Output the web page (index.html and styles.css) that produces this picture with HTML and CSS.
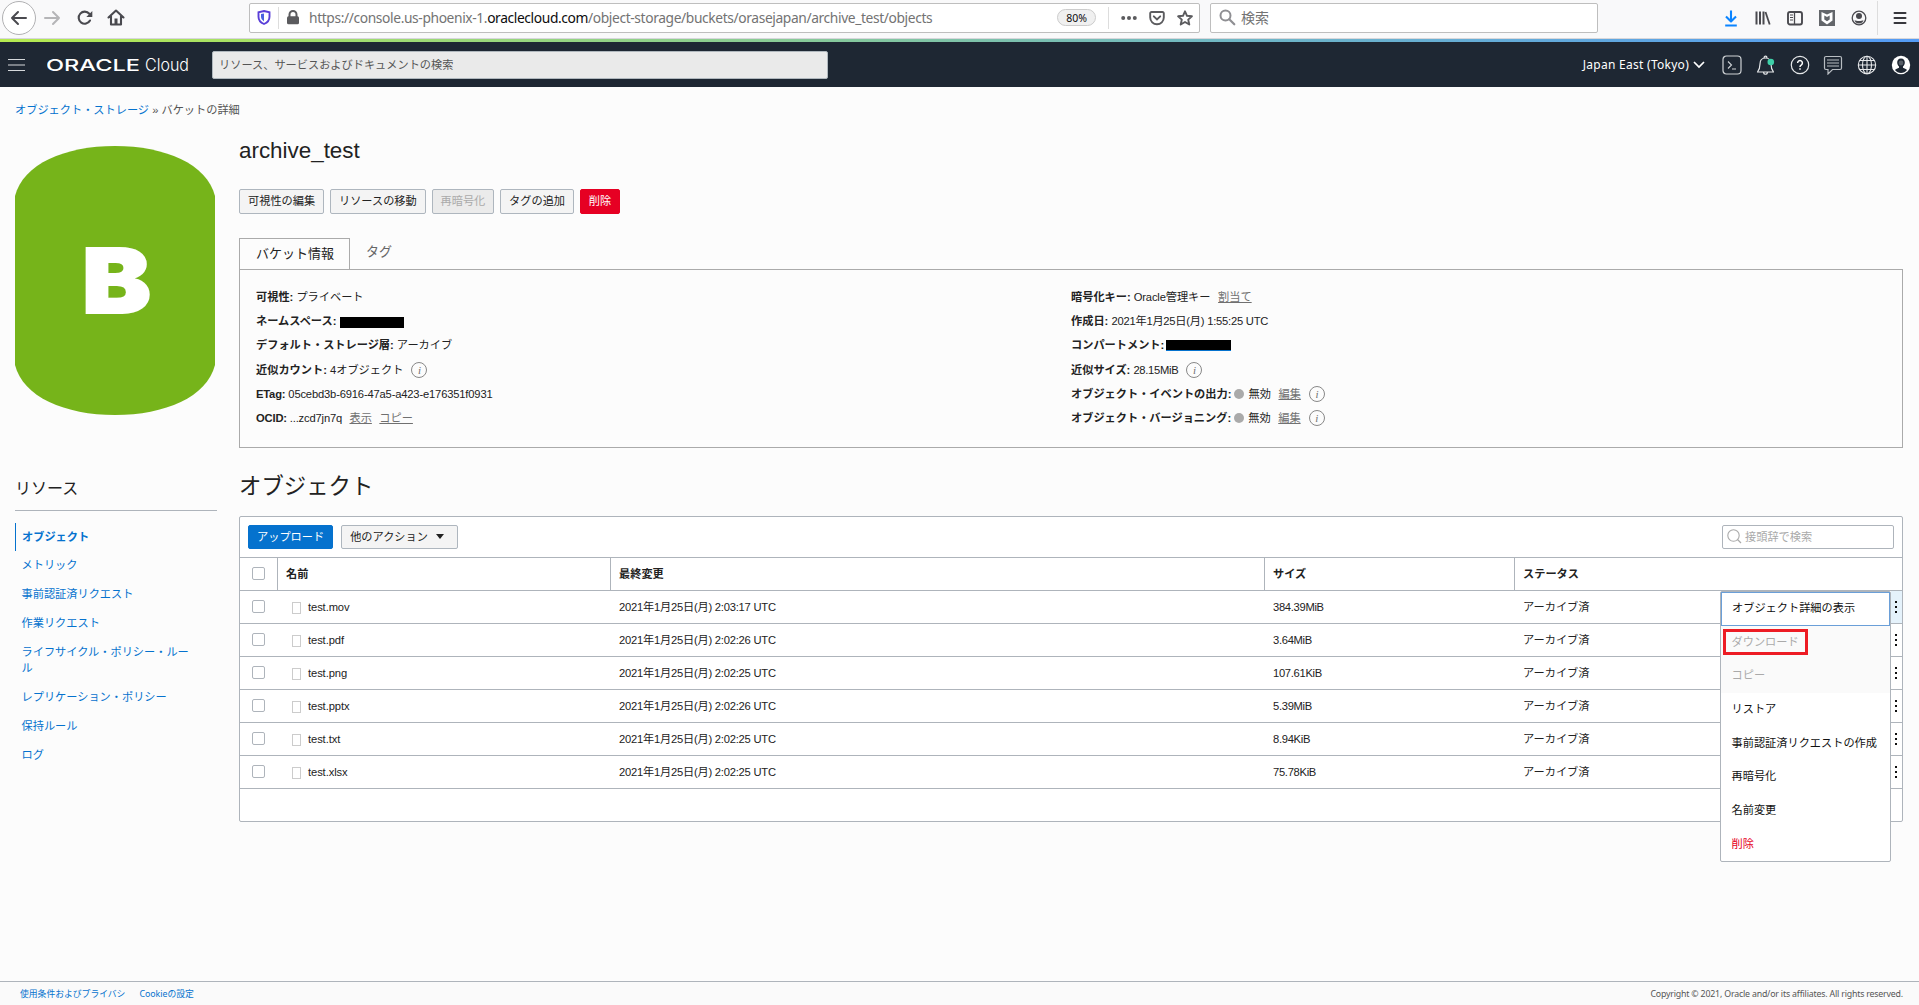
FILE: index.html
```html
<!DOCTYPE html>
<html lang="ja">
<head>
    <meta charset="UTF-8">
    <title>バケットの詳細</title>
    <link rel="stylesheet" href="styles.css">
</head>
<body>
    <div class="browser">
        <div class="back">
            <svg width="18" height="16" viewBox="0 0 18 16"><path d="M16 8H2M8 2L2 8l6 6" fill="none" stroke="#4a4a4f" stroke-width="2" stroke-linecap="round" stroke-linejoin="round"/></svg>
        </div>
        <svg class="forward" width="18" height="16" viewBox="0 0 18 16"><path d="M2 8h14M10 2l6 6-6 6" fill="none" stroke="#b5b5b7" stroke-width="2" stroke-linecap="round" stroke-linejoin="round"/></svg>
        <svg class="reload" width="16" height="16" viewBox="0 0 16 16"><path d="M13 10.500A6 6 0 1 1 12.300 3.800" fill="none" stroke="#4a4a4f" stroke-width="2.100" stroke-linecap="round"/><path d="M15.300 1v6H9.300z" fill="#4a4a4f"/></svg>
        <svg class="home" width="18" height="17" viewBox="0 0 18 17"><path d="M1.500 8.500L9 1.500l7.500 7M4 7v8.500h10V7" fill="none" stroke="#4a4a4f" stroke-width="2.100" stroke-linecap="round" stroke-linejoin="round"/><path d="M7.500 9.500h3V15h-3z" fill="#4a4a4f"/></svg>
        <div class="urlbar">
            <svg class="shield" width="14" height="15" viewBox="0 0 14 15"><path d="M7 1l5.500 1.200v4.500c0 3.500-2 5.800-5.500 7.300-3.500-1.500-5.500-3.800-5.500-7.300V2.200z" fill="none" stroke="#5a3fd8" stroke-width="1.900"/><path d="M7 3.500v8C5 10 4 8.500 4 6.500V4z" fill="#4a62e0"/></svg>
            <span class="divider"></span>
            <svg class="lock" width="14" height="15" viewBox="0 0 14 15"><path d="M3.500 7V4.500a3.500 3.500 0 0 1 7 0V7" fill="none" stroke="#5b5b5e" stroke-width="2"/><rect x="1" y="6.300" width="12" height="8" rx="1.500" fill="#5b5b5e"/></svg>
            <span class="url">https://console.us-phoenix-1.<b>oraclecloud.com</b>/object-storage/buckets/orasejapan/archive_test/objects</span>
            <span class="zoom">80%</span>
            <span class="url-tools">
                <svg width="16" height="16" viewBox="0 0 16 16"><g fill="#5b5b5e"><circle cx="2.200" cy="8" r="2"/><circle cx="8" cy="8" r="2"/><circle cx="13.800" cy="8" r="2"/></g></svg>
                <svg width="16" height="16" viewBox="0 0 16 16"><path d="M2.500 2h11a1.300 1.300 0 0 1 1.300 1.300V7.500a6.800 6.800 0 0 1-13.600 0V3.300A1.300 1.300 0 0 1 2.500 2z" fill="none" stroke="#5b5b5e" stroke-width="1.900"/><path d="M4.800 6.300L8 9.500l3.200-3.200" fill="none" stroke="#5b5b5e" stroke-width="1.900" stroke-linecap="round"/></svg>
                <svg width="16" height="16" viewBox="0 0 16 16"><path d="M8 1.300l2 4.500 4.900.5-3.700 3.300 1.100 4.900L8 12l-4.300 2.500 1.100-4.900L1.100 6.300 6 5.800z" fill="none" stroke="#5b5b5e" stroke-width="1.900" stroke-linejoin="round"/></svg>
            </span>
        </div>
        <div class="searchbar">
            <svg width="17" height="17" viewBox="0 0 17 17"><circle cx="6.500" cy="6.500" r="5" fill="none" stroke="#8f8f93" stroke-width="2"/><path d="M10.300 10.300l5 5" stroke="#8f8f93" stroke-width="2.200" stroke-linecap="round"/></svg>
            <span>検索</span>
        </div>
        <div class="toolbar-icons">
            <svg width="16" height="18" viewBox="0 0 16 18"><path d="M8 1.500v11M3 7.500l5 5 5-5M2.200 16.500h11.600" fill="none" stroke="#0a84ff" stroke-width="2.100" stroke-linejoin="round"/></svg>
            <svg width="16" height="16" viewBox="0 0 16 16"><path d="M1.500 1.500v13M5 1.500v13M8.500 1.500v13" stroke="#4a4a4f" stroke-width="2"/><path d="M10.500 2l4.200 12.500" stroke="#4a4a4f" stroke-width="1.800"/></svg>
            <svg width="16" height="16" viewBox="0 0 16 16"><rect x="1" y="2" width="14" height="12.500" rx="2" fill="none" stroke="#4a4a4f" stroke-width="1.900"/><path d="M7.500 2v12" stroke="#4a4a4f" stroke-width="1.300"/><path d="M3 5h3M3 7.500h3M3 10h3" stroke="#4a4a4f"/></svg>
            <svg width="16" height="16" viewBox="0 0 16 16"><rect width="16" height="16" fill="#63666a"/><path d="M2.500 2L8 4.500 13.500 2v8.500L8 14.500l-5.500-4z" fill="#fff"/><path d="M5.300 5.500L8 7l2.700-1.500v4L8 11.300 5.300 9.500z" fill="#63666a"/></svg>
            <svg width="16" height="16" viewBox="0 0 16 16"><circle cx="8" cy="8" r="6.800" fill="none" stroke="#4a4a4f" stroke-width="1.300"/><circle cx="8" cy="6" r="3" fill="#4a4a4f"/><path d="M3.500 10.200c2 1 7 1 9 0-.7 2.300-2.500 3.300-4.500 3.300s-3.800-1-4.500-3.300z" fill="#4a4a4f"/></svg>
        </div>
        <div class="app-menu">
            <svg width="14" height="14" viewBox="0 0 14 14"><path d="M1.500 2h11M1.500 7h11M1.500 12h11" stroke="#38383d" stroke-width="2" stroke-linecap="round"/></svg>
        </div>
    </div>
    <div class="stripe"></div>

    <header class="nav">
        <svg class="burger" width="17" height="12" viewBox="0 0 17 12"><path d="M0 .5h17M0 6h17M0 11.500h17" stroke="#d5d8db"/></svg>
        <svg class="brand" width="146" height="24" viewBox="0 0 146 24">
            <text class="brand-oracle" x="-1" y="18" textLength="94" lengthAdjust="spacingAndGlyphs">ORACLE</text>
            <text class="brand-cloud" x="98" y="18" textLength="44" lengthAdjust="spacingAndGlyphs">Cloud</text>
        </svg>
        <div class="nav-search">リソース、サービスおよびドキュメントの検索</div>
        <div class="region">Japan East (Tokyo)</div>
        <svg class="chevron" width="12" height="8" viewBox="0 0 12 8"><path d="M1 1l5 5 5-5" fill="none" stroke="#fff" stroke-width="1.700"/></svg>
        <div class="nav-icons">
            <svg width="20" height="20" viewBox="0 0 20 20"><rect x="1" y="1" width="18" height="18" rx="3.500" fill="none" stroke="#cfd3d6" stroke-width="1.200"/><path d="M6 6.500l3.500 3.500L6 13.500M10 14h4" fill="none" stroke="#cfd3d6" stroke-width="1.100"/></svg>
            <svg width="20" height="20" viewBox="0 0 20 20"><path d="M1.500 17h16c-2-2.500-2.500-4-2.500-8 0-3.500-2-6-5.500-6S4 5.500 4 9c0 4-.5 5.500-2.500 8zM8 3c0-2.500 3-2.500 3 0M7.500 17.500c.5 2.300 3.500 2.300 4 0" fill="none" stroke="#e6e8ea" stroke-width="1.200" stroke-linejoin="round"/><circle cx="14.800" cy="7" r="3.300" fill="#3ecfa8"/></svg>
            <svg width="20" height="20" viewBox="0 0 20 20"><circle cx="10" cy="10" r="8.700" fill="none" stroke="#e6e8ea" stroke-width="1.200"/><path d="M7.600 8a2.400 2.400 0 1 1 3.600 2.100c-.8.500-1.200.8-1.200 1.900M10 13.300v1.500" fill="none" stroke="#fff" stroke-width="1.500"/></svg>
            <svg width="20" height="20" viewBox="0 0 20 20"><path d="M3 1.500h14a1.500 1.500 0 0 1 1.500 1.500v10a1.500 1.500 0 0 1-1.500 1.500H9.500L5 19v-4.500H3A1.500 1.500 0 0 1 1.500 13V3A1.500 1.500 0 0 1 3 1.500z" fill="none" stroke="#b8bdc2" stroke-width="1.200"/><path d="M4 5h12M4 8h12M4 11h12" stroke="#b8bdc2" stroke-width="1.100"/></svg>
            <svg width="20" height="20" viewBox="0 0 20 20"><g fill="none" stroke="#e6e8ea" stroke-width="1.100"><circle cx="10" cy="10" r="8.700"/><ellipse cx="10" cy="10" rx="4.500" ry="8.700"/><path d="M10 1v18M1 10h18M2.500 5.500h15M2.500 14.500h15"/></g></svg>
            <svg width="20" height="20" viewBox="0 0 20 20"><circle cx="10" cy="10" r="9.200" fill="#fff"/><path d="M10 3.500c-2.700 0-3.800 1.800-3.800 4 0 1.800.8 3.200 1.800 4v1.300c-1.500.7-3 1-4 2.200 1.500 2 3.500 3 6 3s4.500-1 6-3c-1-1.200-2.500-1.500-4-2.200v-1.300c1-.8 1.800-2.200 1.800-4 0-2.200-1.100-4-3.800-4z" fill="#1e2733"/><circle cx="10" cy="8" r="2.400" fill="#fff" opacity=".25"/></svg>
        </div>
    </header>

    <div class="page">
        <aside class="side">
            <div class="crumbs"><a>オブジェクト・ストレージ</a> » バケットの詳細</div>
            <svg class="bucket" width="200" height="269" viewBox="0 0 200 269">
                <path d="M0 50C8 18 50 0 100 0s92 18 100 50v169c-8 32-50 50-100 50S8 251 0 219z"/>
                <text x="67" y="167" textLength="69" lengthAdjust="spacingAndGlyphs">B</text>
            </svg>
            <h3>リソース</h3>
            <ul class="resources">
                <li class="active">オブジェクト</li>
                <li>メトリック</li>
                <li>事前認証済リクエスト</li>
                <li>作業リクエスト</li>
                <li>ライフサイクル・ポリシー・ルール</li>
                <li>レプリケーション・ポリシー</li>
                <li>保持ルール</li>
                <li>ログ</li>
            </ul>
        </aside>

        <main class="main">
            <h1>archive_test</h1>
            <div class="actions">
                <button class="btn">可視性の編集</button>
                <button class="btn">リソースの移動</button>
                <button class="btn disabled">再暗号化</button>
                <button class="btn">タグの追加</button>
                <button class="btn danger">削除</button>
            </div>

            <div class="tabs">
                <div class="tab current">バケット情報</div>
                <div class="tab">タグ</div>
            </div>
            <div class="info">
                <div class="info-col">
                    <p><b>可視性:</b> プライベート</p>
                    <p><b>ネームスペース:</b> <span class="redact"></span></p>
                    <p><b>デフォルト・ストレージ層:</b> アーカイブ</p>
                    <p><b>近似カウント:</b> 4オブジェクト <i class="tip">i</i></p>
                    <p class="latin"><b>ETag:</b> 05cebd3b-6916-47a5-a423-e176351f0931</p>
                    <p class="latin"><b>OCID:</b> ...zcd7jn7q <a>表示</a> <a>コピー</a></p>
                </div>
                <div class="info-col">
                    <p><b>暗号化キー:</b> <span class="latin">Oracle</span>管理キー <a>割当て</a></p>
                    <p><b>作成日:</b> <span class="date">2021年1月25日(月) 1:55:25 UTC</span></p>
                    <p><b>コンパートメント:</b> <span class="redact linked"></span></p>
                    <p><b>近似サイズ:</b> <span class="size">28.15MiB</span> <i class="tip">i</i></p>
                    <p><b>オブジェクト・イベントの出力:</b> <span class="dot"></span>無効 <a>編集</a> <i class="tip">i</i></p>
                    <p><b>オブジェクト・バージョニング:</b> <span class="dot"></span>無効 <a>編集</a> <i class="tip">i</i></p>
                </div>
            </div>

            <h2>オブジェクト</h2>
            <div class="panel">
                <div class="panel-bar">
                    <button class="btn primary">アップロード</button>
                    <button class="btn more">他のアクション <span class="caret"></span></button>
                    <div class="prefix">
                        <svg width="15" height="15" viewBox="0 0 15 15"><circle cx="6.500" cy="6.500" r="5.700" fill="none" stroke="#aaa" stroke-width="1.100"/><path d="M10.500 10.500l3.500 3.500" stroke="#aaa" stroke-width="1.300"/></svg>
                        <span>接頭辞で検索</span>
                    </div>
                </div>
                <table>
                    <colgroup><col class="c-check"><col class="c-name"><col class="c-date"><col class="c-size"><col><col class="c-menu"></colgroup>
                    <tr><th><span class="check"></span></th><th>名前</th><th>最終変更</th><th>サイズ</th><th>ステータス</th><th></th></tr>
                    <tr><td><span class="check"></span></td><td><span class="file"></span>test.mov</td><td class="date">2021年1月25日(月) 2:03:17 UTC</td><td class="size">384.39MiB</td><td>アーカイブ済</td><td class="dots open"><span></span></td></tr>
                    <tr><td><span class="check"></span></td><td><span class="file"></span>test.pdf</td><td class="date">2021年1月25日(月) 2:02:26 UTC</td><td class="size">3.64MiB</td><td>アーカイブ済</td><td class="dots"><span></span></td></tr>
                    <tr><td><span class="check"></span></td><td><span class="file"></span>test.png</td><td class="date">2021年1月25日(月) 2:02:25 UTC</td><td class="size">107.61KiB</td><td>アーカイブ済</td><td class="dots"><span></span></td></tr>
                    <tr><td><span class="check"></span></td><td><span class="file"></span>test.pptx</td><td class="date">2021年1月25日(月) 2:02:26 UTC</td><td class="size">5.39MiB</td><td>アーカイブ済</td><td class="dots"><span></span></td></tr>
                    <tr><td><span class="check"></span></td><td><span class="file"></span>test.txt</td><td class="date">2021年1月25日(月) 2:02:25 UTC</td><td class="size">8.94KiB</td><td>アーカイブ済</td><td class="dots"><span></span></td></tr>
                    <tr><td><span class="check"></span></td><td><span class="file"></span>test.xlsx</td><td class="date">2021年1月25日(月) 2:02:25 UTC</td><td class="size">75.78KiB</td><td>アーカイブ済</td><td class="dots"><span></span></td></tr>
                </table>
                <ul class="menu">
                    <li class="focus">オブジェクト詳細の表示</li>
                    <li class="off"><span class="marked">ダウンロード</span></li>
                    <li class="off">コピー</li>
                    <li>リストア</li>
                    <li>事前認証済リクエストの作成</li>
                    <li>再暗号化</li>
                    <li>名前変更</li>
                    <li class="delete">削除</li>
                </ul>
            </div>
        </main>
    </div>

    <footer class="footer">
        <a>使用条件およびプライバシ</a>
        <a>Cookieの設定</a>
        <span class="copy">Copyright © 2021, Oracle and/or its affiliates. All rights reserved.</span>
    </footer>
</body>
</html>
```

FILE: styles.css
```css
* {
    box-sizing: border-box;
}
body {
    margin: 0;
    height: 1005px;
    display: flex;
    flex-direction: column;
    overflow: hidden;
    background: #fcfcfc;
    color: #222;
    font-family: "Liberation Sans", "Noto Sans CJK JP", sans-serif;
    font-size: 11.2px;
    line-height: 16px;
}
h1, h2, h3, p, ul {
    margin: 0;
    padding: 0;
    font-weight: normal;
}
ul {
    list-style: none;
}
svg {
    display: block;
    flex: none;
}
a {
    color: #0572ce;
}

/* browser toolbar */
.browser {
    display: flex;
    align-items: center;
    height: 39px;
    padding: 0 12px 3px 2px;
    background: #f9f9fa;
    border-bottom: 1px solid #d7d7db;
}
.back {
    display: flex;
    align-items: center;
    justify-content: center;
    width: 34px;
    height: 34px;
    border: 1px solid #b1b1b3;
    border-radius: 50%;
    background: #fff;
}
.forward {
    margin-left: 7px;
}
.reload {
    margin-left: 16px;
}
.home {
    margin-left: 14px;
}
.urlbar, .searchbar {
    display: flex;
    align-items: center;
    height: 30px;
    background: #fff;
    border: 1px solid #bebebe;
    border-radius: 2px;
}
.urlbar {
    width: 951px;
    margin-left: 124px;
    padding: 0 6px 0 7px;
    font-family: "Noto Sans", sans-serif;
}
.divider {
    width: 1px;
    height: 22px;
    margin: 0 7px;
    background: #ddd;
}
.url {
    width: 748px;
    margin-left: 9px;
    padding-top: 1px;
    color: #737373;
    font-size: 13.8px;
    letter-spacing: -0.38px;
    white-space: nowrap;
}
.url b {
    color: #0c0c0d;
    font-weight: normal;
}
.zoom {
    width: 39px;
    height: 17px;
    border: 1px solid #ccc;
    border-radius: 9px;
    background: #f0f0f0;
    color: #0c0c0d;
    font-size: 10.5px;
    line-height: 16px;
    text-align: center;
}
.url-tools {
    display: flex;
    gap: 12px;
    margin-left: 12px;
    padding: 3px 0 3px 12px;
    border-left: 1px solid #ddd;
}
.searchbar {
    width: 388px;
    margin-left: 10px;
    padding-left: 8px;
    gap: 5px;
    color: #737373;
    font-size: 14px;
}
.toolbar-icons {
    display: flex;
    align-items: center;
    gap: 16px;
    margin-left: 125px;
}
.app-menu {
    margin-left: auto;
    padding: 10px 0 10px 15px;
    border-left: 1px solid #ddd;
}
.stripe {
    height: 3px;
    background: linear-gradient(to right, #b5ea50, #8fd08c 35%, #6fb6c6 65%, #549bf5);
}

/* console header */
.nav {
    display: flex;
    align-items: center;
    height: 45px;
    padding: 0 8px;
    background: #1e2733;
    color: #fff;
}
.brand {
    margin-left: 22px;
}
.brand text {
    fill: #fff;
}
.brand-oracle {
    font: 500 16.5px "Inter", sans-serif;
}
.brand-cloud {
    font: 300 17px "Inter", sans-serif;
}
.nav-search {
    width: 616px;
    height: 28px;
    margin-left: 19px;
    padding-left: 6px;
    border: 1px solid #b0b8be;
    border-radius: 2px;
    background: #eaeaea;
    color: #555;
    line-height: 26px;
}
.region {
    margin: 1px 0 0 auto;
    font-family: "Noto Sans", sans-serif;
    font-size: 12px;
    letter-spacing: 0.27px;
}
.chevron {
    margin: 1px 0 0 4px;
}
.nav-icons {
    display: flex;
    gap: 13.8px;
    margin-left: 17px;
}

/* page */
.page {
    display: flex;
    flex: 1;
    padding: 0 16px 0 15px;
}
.side {
    width: 202px;
    margin-right: 22px;
}
.crumbs {
    margin-top: 15px;
    width: 260px;
    color: #555;
    white-space: nowrap;
}
.bucket {
    margin-top: 28px;
    fill: #76b41a;
}
.bucket text {
    fill: #fff;
    stroke: #fff;
    stroke-width: 2px;
    font: 900 90px "Inter", sans-serif;
}
.side h3 {
    margin-top: 63px;
    height: 33px;
    border-bottom: 1px solid #aeb4bb;
    font-size: 16px;
    line-height: 22px;
}
.resources {
    padding-top: 12px;
    color: #0572ce;
}
.resources li {
    padding: 6px 20px 7px 6.5px;
    word-break: break-all;
}
.resources .active {
    padding: 6px 20px 6px 6px;
    border-left: 1px solid #0572ce;
    font-weight: bold;
}
.main {
    flex: 1;
}
h1 {
    margin-top: 51px;
    font-size: 22.4px;
    line-height: 26px;
}
.actions {
    display: flex;
    gap: 5.8px;
    margin-top: 25px;
}
.btn {
    height: 25px;
    padding: 0 8px;
    border: 1px solid #aeb6be;
    border-radius: 2px;
    background: #f4f4f4;
    color: #222;
    font: 11.2px/21px "Liberation Sans", "Noto Sans CJK JP", sans-serif;
    white-space: nowrap;
}
.btn.disabled {
    background: #ebebeb;
    color: #aaa;
}
.btn.danger {
    border-color: #e60023;
    background: #e60023;
    color: #fff;
}
.btn.primary {
    border-color: #0572ce;
    background: #0572ce;
    color: #fff;
}
.tabs {
    display: flex;
    margin-top: 24px;
    font-size: 13px;
}
.tab {
    height: 31px;
    padding: 0 16px;
    color: #666;
    line-height: 28px;
    white-space: nowrap;
}
.tab.current {
    width: 111px;
    border: 1px solid #aaa;
    border-bottom: 0;
    color: #222;
    line-height: 29px;
}
.info {
    display: flex;
    height: 179px;
    padding: 15px 16px;
    border: 1px solid #aaa;
}
.info-col {
    width: 815px;
}
.info-col p {
    height: 24.2px;
    line-height: 24.2px;
    white-space: nowrap;
}
.info-col a {
    margin-left: 4.5px;
    color: #707070;
    letter-spacing: 0;
    text-decoration: underline;
}
.latin {
    letter-spacing: -0.17px;
}
.date {
    letter-spacing: -0.22px;
}
.size {
    letter-spacing: -0.3px;
}
.redact {
    display: inline-block;
    width: 64px;
    height: 11px;
    margin-left: 1px;
    background: #000;
    vertical-align: -3px;
}
.redact.linked {
    width: 65px;
    height: 11px;
    margin-left: -1px;
    border-bottom: 1px solid #0572ce;
    vertical-align: -2px;
}
.dot {
    display: inline-block;
    width: 10px;
    height: 10px;
    margin-right: 4px;
    border-radius: 50%;
    background: #aaa;
    vertical-align: -1px;
}
.tip {
    display: inline-block;
    width: 16px;
    height: 16px;
    margin-left: 5px;
    border: 1px solid #888;
    border-radius: 50%;
    color: #707070;
    font: italic 11px/14px "Liberation Serif", serif;
    letter-spacing: 0;
    text-align: center;
    vertical-align: 0;
}
h2 {
    margin-top: 24px;
    height: 44px;
    font-size: 22.4px;
    line-height: 30px;
}

/* object list */
.panel {
    position: relative;
    height: 306px;
    border: 1px solid #aeb4bb;
    border-radius: 2px;
    background: #fff;
}
.panel-bar {
    display: flex;
    height: 41px;
    padding: 8px;
    border-bottom: 1px solid #aeb4bb;
}
.panel-bar .btn {
    height: 24px;
}
.btn.more {
    margin-left: 8px;
    padding-right: 13px;
}
.caret {
    display: inline-block;
    margin-left: 5px;
    border: 4px solid transparent;
    border-top: 5px solid #222;
    border-bottom: 0;
    vertical-align: 2px;
}
.prefix {
    display: flex;
    align-items: center;
    gap: 3px;
    width: 172px;
    height: 24px;
    margin-left: auto;
    padding: 0 0 1px 4px;
    border: 1px solid #aeb4bb;
    border-radius: 2px;
    color: #aaa;
}
table {
    width: 100%;
    table-layout: fixed;
    border-collapse: separate;
    border-spacing: 0;
}
.c-check { width: 38px; }
.c-name { width: 333px; }
.c-date { width: 654px; }
.c-size { width: 250px; }
.c-menu { width: 11px; }
th, td {
    height: 33px;
    padding: 0 8px;
    border-bottom: 1px solid #aeb4bb;
    text-align: left;
    white-space: nowrap;
}
th:nth-child(-n+4) {
    border-right: 1px solid #aeb4bb;
}
th:first-child, td:first-child {
    padding: 0 12px 1px;
}
td:nth-child(2) {
    padding-left: 13px;
    letter-spacing: -0.1px;
}
.check {
    display: block;
    width: 13px;
    height: 13px;
    border: 1px solid #aeb4bb;
    border-radius: 2px;
    background: #fff;
}
.file {
    display: inline-block;
    width: 9px;
    height: 12px;
    margin: 0 7px 0 1px;
    border: 1px solid #ccc;
    vertical-align: -3px;
}
.dots {
    padding: 0 0 0 4px;
}
.dots.open {
    background: #e5f2fb;
}
.dots span {
    display: block;
    width: 2px;
    height: 2px;
    background: #111;
    box-shadow: 0 -5px #111, 0 5px #111;
}

/* row action menu, opens over the list */
.menu {
    position: absolute;
    top: 74px;
    right: 11px;
    width: 171px;
    height: 271px;
    border: 1px solid #aeb4bb;
    border-radius: 2px;
    background: #fff;
    color: #111;
}
.menu li {
    height: 33.7px;
    padding-left: 10.5px;
    line-height: 33.7px;
}
.menu .focus {
    padding-left: 10px;
    border: 1px solid #6a9fd8;
    line-height: 31px;
}
.menu .off {
    background: #fafafa;
    color: #aaa;
}
.menu .delete {
    color: #e60023;
}
.marked {
    display: inline-block;
    height: 26px;
    margin-left: -9px;
    padding: 0 6px;
    border: 3px solid #ed1c24;
    line-height: 20px;
}

.footer {
    display: flex;
    height: 24px;
    padding: 0 16px 0 20px;
    border-top: 1px solid #aeb4bb;
    background: #fafafa;
    font-family: "Noto Sans", "Noto Sans CJK JP", sans-serif;
    font-size: 8.8px;
    line-height: 24px;
}
.footer a {
    margin-right: 14px;
}
.copy {
    margin-left: auto;
    color: #555;
    letter-spacing: -0.19px;
}
```
